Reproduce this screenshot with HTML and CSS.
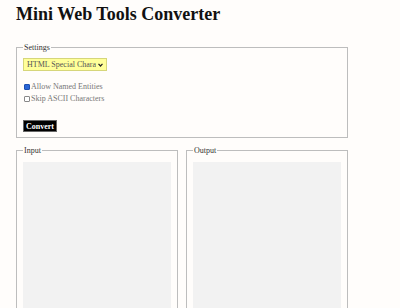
FILE: index.html
```html
<!DOCTYPE html>
<html lang="en">
<head>
    <meta charset="UTF-8">
    <meta name="viewport" content="width=device-width, initial-scale=1.0">
    <title>Mini Web Tools Converter</title>
    <link rel="stylesheet" href="styles.css">
</head>
<body>
    <div class="page">
        <h1 class="title">Mini Web Tools Converter</h1>

        <fieldset class="box settings">
            <legend>Settings</legend>
            <div class="select-wrap">
                <select id="modeSelect" class="mode-select">
                    <option>HTML Special Characters</option>
                    <option>URL Encode</option>
                    <option>Base64</option>
                </select>
                <svg class="select-arrow" width="5" height="4" viewBox="0 0 5 4"><path d="M0.5 0.8 L2.5 3 L4.5 0.8" fill="none" stroke="#222" stroke-width="1.2"/></svg>
            </div>
            <div class="options">
                <label class="option"><input type="checkbox" id="namedEntities" checked> Allow Named Entities</label>
                <label class="option"><input type="checkbox" id="skipAscii"> Skip ASCII Characters</label>
            </div>
            <button id="convertButton" class="convert-btn">Convert</button>
        </fieldset>

        <div class="io">
            <fieldset class="box">
                <legend>Input</legend>
                <textarea id="inputText" class="text-area"></textarea>
            </fieldset>
            <fieldset class="box">
                <legend>Output</legend>
                <textarea id="outputText" class="text-area" readonly></textarea>
            </fieldset>
        </div>
    </div>
</body>
</html>
```

FILE: styles.css
```css
body {
    margin: 0;
    background-color: #fffdfb;
    color: #222;
    font-family: 'Liberation Serif', 'Times New Roman', serif;
}
.page {
    width: 332px;
    padding: 0 16px;
}
.title {
    font-size: 18px;
    font-weight: bold;
    margin: 4px 0 18px;
    color: #111;
}
.box {
    margin: 0;
    border: 1px solid #bdbdbd;
    padding: 0 6px 5px;
    min-width: 0;
}
.box legend {
    font-size: 8px;
    color: #333;
    padding: 0 1px;
}
.select-wrap {
    position: relative;
    width: 84px;
    margin-top: 6px;
}
.mode-select {
    appearance: none;
    -webkit-appearance: none;
    display: block;
    width: 84px;
    height: 13px;
    font-family: inherit;
    font-size: 8px;
    color: #555;
    background-color: #ffff99;
    border: 1px solid #d6d67a;
    border-radius: 0;
    padding: 0 10px 0 3px;
    margin: 0;
}
.select-arrow {
    position: absolute;
    right: 4px;
    top: 5px;
}
.options {
    margin-top: 11px;
    display: flex;
    flex-direction: column;
    gap: 3px;
}
.option {
    font-size: 8px;
    color: #777;
    display: flex;
    align-items: center;
    height: 9px;
}
.option input {
    appearance: none;
    -webkit-appearance: none;
    width: 6px;
    height: 6px;
    margin: 0 1px 0 1px;
    border: 1px solid #888;
    background: #fff;
    box-sizing: border-box;
    border-radius: 1px;
}
.option input:checked {
    background: #2a66d6;
    border-color: #1d4fb0;
}
.convert-btn {
    margin-top: 17px;
    display: block;
    background-color: #000;
    color: #fff;
    border: 1px solid #666;
    font-family: inherit;
    font-weight: bold;
    font-size: 8px;
    padding: 0 2px;
    height: 12px;
}
.io {
    margin-top: 8px;
    display: grid;
    grid-template-columns: 162px 162px;
    gap: 8px;
}
.text-area {
    display: block;
    width: 100%;
    box-sizing: border-box;
    height: 160px;
    background-color: #f2f2f2;
    border: none;
    resize: none;
    margin-top: 7px;
}
```
